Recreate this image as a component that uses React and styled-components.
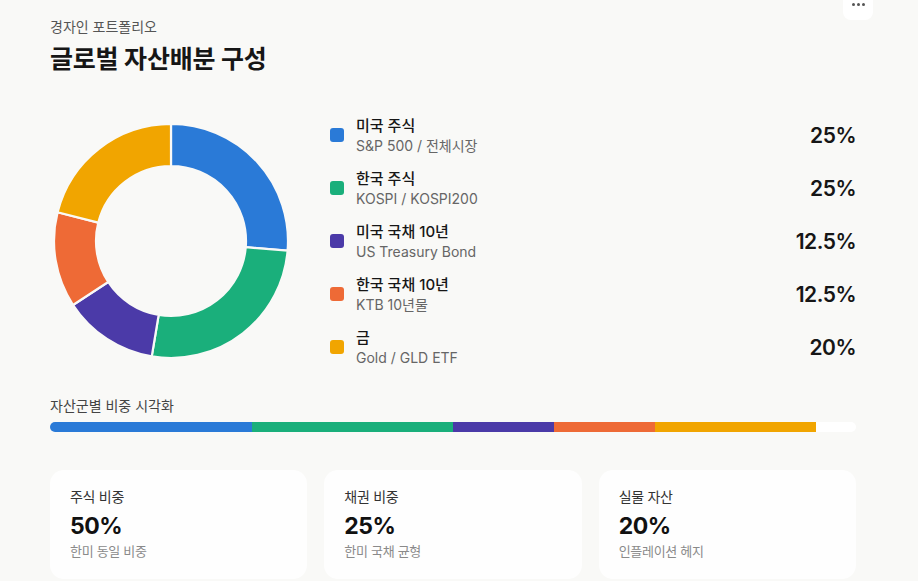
import styled, { createGlobalStyle } from 'styled-components';

/** 자산 구성 데이터 */
const ASSETS = [
  { id: 'us-stock', name: '미국 주식', desc: 'S&P 500 / 전체시장', pct: 25, color: '#2A7AD7' },
  { id: 'kr-stock', name: '한국 주식', desc: 'KOSPI / KOSPI200', pct: 25, color: '#1AAF7B' },
  { id: 'us-bond', name: '미국 국채 10년', desc: 'US Treasury Bond', pct: 12.5, color: '#4B3AA8' },
  { id: 'kr-bond', name: '한국 국채 10년', desc: 'KTB 10년물', pct: 12.5, color: '#EE6A36' },
  { id: 'gold', name: '금', desc: 'Gold / GLD ETF', pct: 20, color: '#F1A500' },
];

const SUMMARY = [
  { label: '주식 비중', value: '50%', note: '한미 동일 비중' },
  { label: '채권 비중', value: '25%', note: '한미 국채 균형' },
  { label: '실물 자산', value: '20%', note: '인플레이션 헤지' },
];

const BG = '#F9F9F7';

/* 도넛 좌표 계산 — 각도는 12시 방향 기준 시계방향 */
const polar = (cx, cy, r, deg) => {
  const rad = ((deg - 90) * Math.PI) / 180;
  return [cx + r * Math.cos(rad), cy + r * Math.sin(rad)];
};

const arcPath = (cx, cy, ro, ri, a0, a1) => {
  const large = a1 - a0 > 180 ? 1 : 0;
  const [x0, y0] = polar(cx, cy, ro, a0);
  const [x1, y1] = polar(cx, cy, ro, a1);
  const [x2, y2] = polar(cx, cy, ri, a1);
  const [x3, y3] = polar(cx, cy, ri, a0);
  return `M${x0} ${y0} A${ro} ${ro} 0 ${large} 1 ${x1} ${y1} L${x2} ${y2} A${ri} ${ri} 0 ${large} 0 ${x3} ${y3} Z`;
};

function Donut() {
  // 합계가 100이 아니어도 원 전체를 채우도록 정규화
  const total = ASSETS.reduce((s, a) => s + a.pct, 0);
  let start = 0;
  return (
    <svg width="240" height="240" viewBox="0 0 240 240">
      {ASSETS.map((a) => {
        const end = start + (a.pct / total) * 360;
        const d = arcPath(120, 120, 117, 75, start, end);
        start = end;
        return <path key={a.id} d={d} fill={a.color} stroke={BG} strokeWidth="2.2" />;
      })}
    </svg>
  );
}

export default function App() {
  return (
    <>
      <GlobalStyle />
      <Page>
        <MoreButton aria-label="더보기">
          <Dot />
          <Dot />
          <Dot />
        </MoreButton>

        {/* ── 헤더 ── */}
        <Header>
          <Eyebrow>경자인 포트폴리오</Eyebrow>
          <Title>글로벌 자산배분 구성</Title>
        </Header>

        {/* ── 도넛 + 범례 ── */}
        <ChartRow>
          <DonutBox>
            <Donut />
          </DonutBox>
          <Legend>
            {ASSETS.map((a) => (
              <LegendRow key={a.id}>
                <Swatch $color={a.color} />
                <LegendText>
                  <LegendName>{a.name}</LegendName>
                  <LegendDesc>{a.desc}</LegendDesc>
                </LegendText>
                <LegendPct>{a.pct}%</LegendPct>
              </LegendRow>
            ))}
          </Legend>
        </ChartRow>

        {/* ── 누적 막대 ── */}
        <BarSection>
          <BarLabel>자산군별 비중 시각화</BarLabel>
          <BarTrack>
            {ASSETS.map((a) => (
              <BarSegment key={a.id} $color={a.color} style={{ width: `${a.pct}%` }} />
            ))}
          </BarTrack>
        </BarSection>

        {/* ── 요약 카드 ── */}
        <Cards>
          {SUMMARY.map((c) => (
            <Card key={c.label}>
              <CardLabel>{c.label}</CardLabel>
              <CardValue>{c.value}</CardValue>
              <CardNote>{c.note}</CardNote>
            </Card>
          ))}
        </Cards>
      </Page>
    </>
  );
}

/* ── styled-components ── */

const GlobalStyle = createGlobalStyle`
  html, body {
    margin: 0;
    background: ${BG};
  }
  body {
    font-family: "Inter", "Noto Sans CJK KR", "Noto Sans", sans-serif;
    color: #111;
    -webkit-font-smoothing: antialiased;
  }
`;

const Page = styled.div`
  position: relative;
  padding: 17px 62px 0 50px;
  height: 581px;
  box-sizing: border-box;
  overflow: hidden;
`;

const MoreButton = styled.button`
  position: absolute;
  top: -10px;
  right: 45px;
  width: 30px;
  height: 30px;
  border: none;
  border-radius: 8px;
  background: #fff;
  display: flex;
  align-items: flex-end;
  justify-content: center;
  gap: 2px;
  padding: 0 0 14px;
`;

const Dot = styled.span`
  width: 3px;
  height: 3px;
  border-radius: 50%;
  background: #555;
`;

const Header = styled.header`
  display: flex;
  flex-direction: column;
  gap: 5px;
`;

const Eyebrow = styled.div`
  font-size: 14px;
  line-height: 20px;
  color: #555;
`;

const Title = styled.h1`
  margin: 0;
  font-size: 25px;
  line-height: 34px;
  font-weight: 700;
  letter-spacing: -0.2px;
  color: #161616;
`;

const ChartRow = styled.section`
  display: flex;
  align-items: center;
  gap: 39px;
  margin-top: 38px;
`;

const DonutBox = styled.div`
  width: 240px;
  height: 240px;
  flex-shrink: 0;
  margin-left: 1px;
`;

const Legend = styled.ul`
  flex: 1;
  list-style: none;
  margin: 0;
  padding: 0;
  display: flex;
  flex-direction: column;
  gap: 11px;
`;

const LegendRow = styled.li`
  display: flex;
  align-items: center;
  gap: 12px;
  height: 42px;
`;

const Swatch = styled.span`
  width: 14px;
  height: 14px;
  border-radius: 3px;
  background: ${({ $color }) => $color};
  flex-shrink: 0;
`;

const LegendText = styled.div`
  flex: 1;
  display: flex;
  flex-direction: column;
`;

const LegendName = styled.span`
  font-size: 15px;
  line-height: 21px;
  font-weight: 500;
  color: #161616;
`;

const LegendDesc = styled.span`
  font-size: 14px;
  line-height: 20px;
  color: #666;
`;

const LegendPct = styled.span`
  font-size: 21px;
  font-weight: 600;
  letter-spacing: -0.5px;
  color: #161616;
`;

const BarSection = styled.section`
  margin-top: 29px;
  display: flex;
  flex-direction: column;
  gap: 7px;
`;

const BarLabel = styled.div`
  font-size: 14px;
  line-height: 18px;
  color: #444;
`;

const BarTrack = styled.div`
  display: flex;
  height: 10px;
  border-radius: 5px;
  overflow: hidden;
  background: #fff;
`;

const BarSegment = styled.div`
  height: 100%;
  background: ${({ $color }) => $color};
`;

const Cards = styled.section`
  display: grid;
  grid-template-columns: repeat(3, 1fr);
  gap: 17px;
  margin-top: 38px;
`;

const Card = styled.div`
  background: #fefefe;
  border-radius: 14px;
  padding: 17px 20px 19px;
  display: flex;
  flex-direction: column;
`;

const CardLabel = styled.div`
  font-size: 14px;
  line-height: 20px;
  color: #333;
  letter-spacing: -0.3px;
`;

const CardValue = styled.div`
  margin-top: 4px;
  font-size: 23px;
  line-height: 30px;
  font-weight: 700;
  letter-spacing: -0.5px;
  color: #111;
`;

const CardNote = styled.div`
  margin-top: 1px;
  font-size: 13px;
  line-height: 18px;
  color: #8a8a8a;
  letter-spacing: -0.3px;
`;
